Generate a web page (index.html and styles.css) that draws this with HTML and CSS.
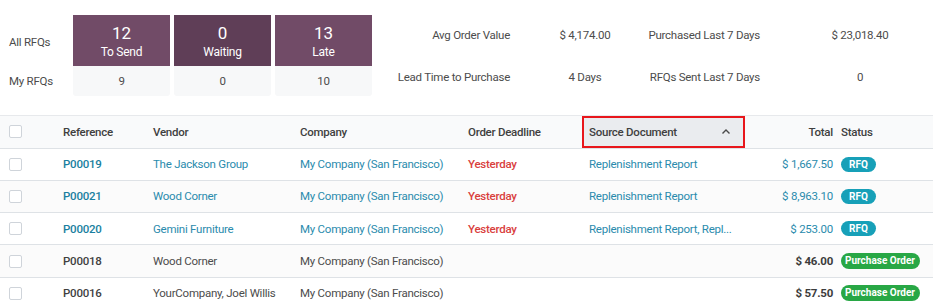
FILE: index.html
```html
<!DOCTYPE html>
<html>
<head>
<meta charset="utf-8">
<link rel="stylesheet" href="styles.css">
</head>
<body>
<div class="dash">
  <div class="rfq-grid">
    <div class="lbl lbl-all">All RFQs</div>
    <div class="tile"><span class="num">12</span><span class="cap">To Send</span></div>
    <div class="tile dark"><span class="num">0</span><span class="cap">Waiting</span></div>
    <div class="tile"><span class="num">13</span><span class="cap">Late</span></div>
    <div class="lbl">My RFQs</div>
    <div class="mine">9</div>
    <div class="mine">0</div>
    <div class="mine">10</div>
  </div>
  <div class="stats">
    <div class="s-lbl">Avg Order Value</div>
    <div class="s-val">$ 4,174.00</div>
    <div class="s-lbl">Purchased Last 7 Days</div>
    <div class="s-val">$ 23,018.40</div>
    <div class="s-lbl">Lead Time to Purchase</div>
    <div class="s-val">4 Days</div>
    <div class="s-lbl">RFQs Sent Last 7 Days</div>
    <div class="s-val">0</div>
  </div>
</div>
<table class="list">
  <colgroup>
    <col class="c-chk"><col class="c-ref"><col class="c-ven"><col class="c-com"><col class="c-dl"><col class="c-src"><col class="c-tot"><col class="c-st">
  </colgroup>
  <thead>
    <tr>
      <th class="chk"><span class="box"></span></th>
      <th>Reference</th>
      <th>Vendor</th>
      <th>Company</th>
      <th>Order Deadline</th>
      <th class="sorted"><span>Source Document</span><svg class="chev" width="10" height="7" viewBox="0 0 10 7"><path d="M1.5 5.5 L5 2 L8.5 5.5" fill="none" stroke="#4a4a4a" stroke-width="1.4"/></svg></th>
      <th class="num-h">Total</th>
      <th class="st">Status</th>
    </tr>
  </thead>
  <tbody>
    <tr>
      <td class="chk"><span class="box"></span></td>
      <td class="link ref">P00019</td>
      <td class="link">The Jackson Group</td>
      <td class="link">My Company (San Francisco)</td>
      <td class="late">Yesterday</td>
      <td class="link">Replenishment Report</td>
      <td class="link amt">$ 1,667.50</td>
      <td class="st"><span class="badge rfq">RFQ</span></td>
    </tr>
    <tr>
      <td class="chk"><span class="box"></span></td>
      <td class="link ref">P00021</td>
      <td class="link">Wood Corner</td>
      <td class="link">My Company (San Francisco)</td>
      <td class="late">Yesterday</td>
      <td class="link">Replenishment Report</td>
      <td class="link amt">$ 8,963.10</td>
      <td class="st"><span class="badge rfq">RFQ</span></td>
    </tr>
    <tr>
      <td class="chk"><span class="box"></span></td>
      <td class="link ref">P00020</td>
      <td class="link">Gemini Furniture</td>
      <td class="link">My Company (San Francisco)</td>
      <td class="late">Yesterday</td>
      <td class="link src">Replenishment Report, Repl...</td>
      <td class="link amt">$ 253.00</td>
      <td class="st"><span class="badge rfq">RFQ</span></td>
    </tr>
    <tr>
      <td class="chk"><span class="box"></span></td>
      <td class="ref">P00018</td>
      <td>Wood Corner</td>
      <td>My Company (San Francisco)</td>
      <td></td>
      <td></td>
      <td class="amt strong">$ 46.00</td>
      <td class="st"><span class="badge po">Purchase Order</span></td>
    </tr>
    <tr>
      <td class="chk"><span class="box"></span></td>
      <td class="ref">P00016</td>
      <td>YourCompany, Joel Willis</td>
      <td>My Company (San Francisco)</td>
      <td></td>
      <td></td>
      <td class="amt strong">$ 57.50</td>
      <td class="st"><span class="badge po">Purchase Order</span></td>
    </tr>
  </tbody>
</table>
</body>
</html>
```
FILE: styles.css
```css
html, body {
  margin: 0;
  padding: 0;
  background: #ffffff;
  overflow: hidden;
}
body {
  font-family: "Roboto", "Open Sans", sans-serif;
  font-size: 11.5px;
  letter-spacing: -0.25px;
  color: #4c4c4c;
  width: 933px;
}
.dash {
  display: flex;
  height: 116px;
  border-bottom: 1px solid #e7e9ec;
  box-sizing: border-box;
}
.rfq-grid {
  flex: none;
  display: grid;
  grid-template-columns: 60px 97px 97px 97px;
  grid-template-rows: 51px 30px;
  column-gap: 4px;
  padding: 15px 0 0 9px;
}
.lbl {
  display: flex;
  align-items: center;
  color: #4c4c4c;
  white-space: nowrap;
}
.lbl-all { padding-top: 2px; }
.tile {
  background: #714b67;
  color: #ffffff;
  display: flex;
  flex-direction: column;
  align-items: center;
  justify-content: center;
  padding-top: 2px;
}
.tile.dark { background: #5f3e57; }
.tile .num {
  font-size: 17px;
  line-height: 20px;
  letter-spacing: 0;
}
.tile .cap {
  font-size: 12px;
  line-height: 18px;
}
.mine {
  background: #f7f8f9;
  border-radius: 0 0 3px 3px;
  display: flex;
  align-items: center;
  justify-content: center;
  color: #4c4c4c;
}
.stats {
  flex: none;
  display: grid;
  grid-template-columns: 131px 150px 100px 200px;
  grid-template-rows: 42px 42px;
  padding-top: 14px;
  margin-left: 7px;
}
.stats > div {
  display: flex;
  align-items: center;
  white-space: nowrap;
}
.s-lbl { justify-content: flex-end; }
.s-val { justify-content: center; }

.list {
  width: 933px;
  border-collapse: collapse;
  table-layout: fixed;
}
.c-chk { width: 56px; }
.c-ref { width: 90px; }
.c-ven { width: 147px; }
.c-com { width: 168px; }
.c-dl { width: 121px; }
.c-src { width: 163px; }
.c-tot { width: 93px; }
.c-st { width: 95px; }
th, td {
  text-align: left;
  padding: 0 0 0 7px;
  white-space: nowrap;
  overflow: hidden;
}
thead tr {
  height: 32px;
  background: #f9fafb;
}
th {
  font-weight: 500;
  color: #3f3f3f;
  border-bottom: 1px solid #dee2e6;
}
tbody tr {
  height: 32.3px;
  border-bottom: 1px solid #dee2e6;
}
tbody tr:nth-child(even) { background: #fbfbfb; }
.chk { padding-left: 9px; }
.box {
  display: block;
  width: 11px;
  height: 11px;
  border: 1px solid #cfd4da;
  border-radius: 2px;
  background: #fff;
}
th.sorted {
  background: #eaecef;
  box-shadow: inset 0 0 0 2px #e8161b;
  position: relative;
}
.chev {
  position: absolute;
  right: 14px;
  top: 12px;
}
.num-h { text-align: right; padding-right: 5px; }
.amt { text-align: right; padding-right: 5px; }
.st { padding-left: 3px; }
.link { color: #2a8bad; }
.ref { font-weight: 500; }
.link.ref { color: #1a7fa0; }
.ref:not(.link) { color: #3f3f3f; }
.late { color: #d9403d; font-weight: 500; }
.strong { font-weight: 700; color: #3c3c3c; }
.badge {
  display: inline-block;
  color: #fff;
  font-size: 10px;
  font-weight: 700;
  letter-spacing: 0;
  line-height: 15px;
  border-radius: 8px;
  padding: 0 8px;
  vertical-align: middle;
}
.badge.rfq { background: #17a0b8; }
.badge.po { background: #28a745; padding: 0 5px 0 4px; line-height: 16px; }
```
